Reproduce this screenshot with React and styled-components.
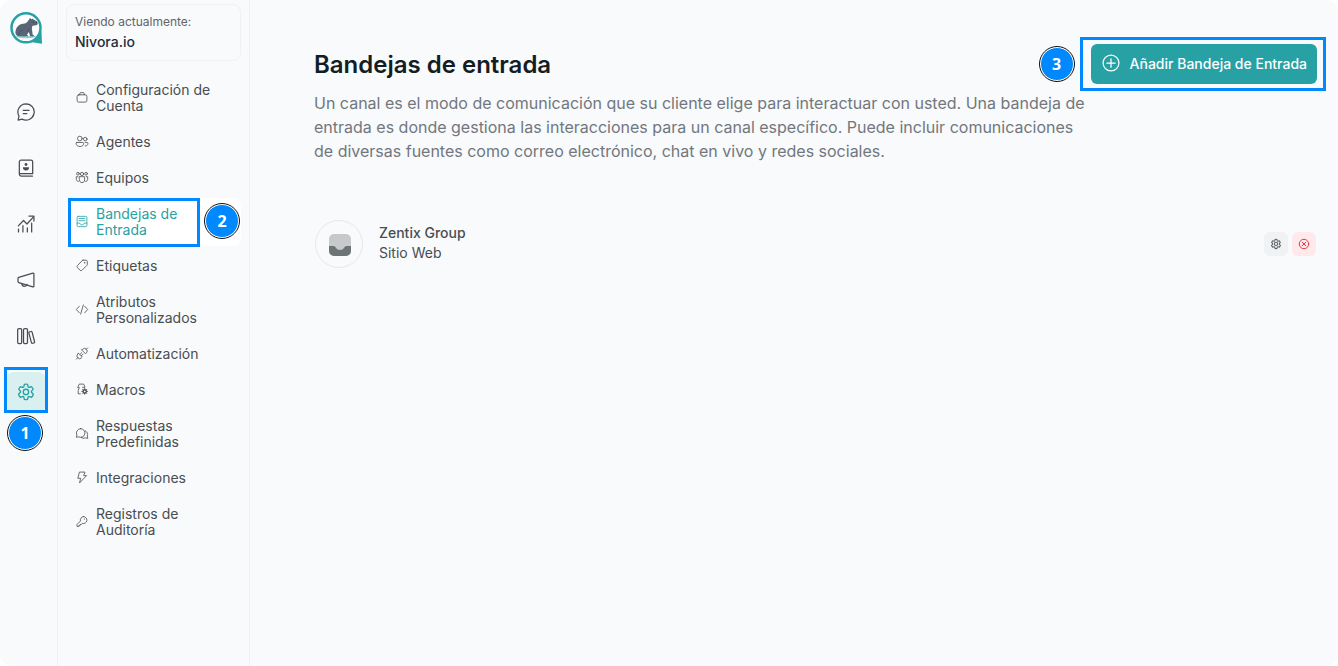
import React, { useState } from 'react';
import styled, { createGlobalStyle } from 'styled-components';

const TEAL = '#28a1a5';
const BLUE = '#0088ff';

const GlobalStyle = createGlobalStyle`
  * {
    box-sizing: border-box;
  }
  body {
    margin: 0;
    background: #ffffff;
    color: #494d52;
    font-family: Inter, 'Noto Sans', sans-serif;
    font-size: 14px;
  }
  button {
    font-family: inherit;
    cursor: pointer;
  }
`;

const Page = styled.div`
  display: flex;
  min-height: 100vh;
  background: #f8fafc;
  border-radius: 12px;
`;

const Rail = styled.nav`
  display: flex;
  flex-direction: column;
  align-items: flex-start;
  gap: 16px;
  flex: 0 0 58px;
  padding: 12px 6px;
  border-right: 1px solid #eff1f4;
`;

const LogoLink = styled.a`
  display: block;
  height: 32px;
  margin: 0 4px 32px;
`;

const RailItem = styled.div`
  position: relative;
`;

const RailButton = styled.button`
  display: flex;
  align-items: center;
  justify-content: center;
  width: 40px;
  height: 40px;
  padding: 0;
  border: 0;
  border-radius: 8px;
  background: ${({ $active }) => ($active ? '#daf0f0' : 'transparent')};
  color: ${({ $active }) => ($active ? TEAL : '#494d52')};
`;

const Sidebar = styled.aside`
  flex: 0 0 192px;
  padding: 4px 8px;
  border-right: 1px solid #eff1f4;
`;

const AccountCard = styled.div`
  height: 57px;
  padding: 7px 8px;
  margin-bottom: 13px;
  border: 1px solid #eff1f4;
  border-radius: 8px;
`;

const AccountLabel = styled.div`
  font-size: 12px;
  line-height: 20px;
  color: #5f656b;
`;

const AccountName = styled.div`
  font-size: 14px;
  font-weight: 500;
  line-height: 20px;
  color: #1f2d3d;
`;

const MenuList = styled.ul`
  display: flex;
  flex-direction: column;
  gap: 4px;
  margin: 0;
  padding: 0;
  list-style: none;
`;

const MenuItem = styled.li`
  position: relative;
`;

const MenuLink = styled.a`
  display: flex;
  align-items: center;
  gap: 6px;
  padding: 8px 16px 8px 8px;
  border-radius: 8px;
  background: ${({ $active }) => ($active ? '#ffffff' : 'transparent')};
  color: ${({ $active }) => ($active ? TEAL : '#494d52')};
  font-size: 14px;
  line-height: 16px;
  text-decoration: none;

  svg {
    flex: 0 0 16px;
    margin-bottom: 2px;
  }
`;

const Main = styled.main`
  flex: 1;
  min-width: 0;
  padding: 44px 21px 44px 64px;
`;

const Header = styled.header`
  display: flex;
  align-items: flex-start;
  gap: 2px;
  margin-bottom: 57px;
`;

const Intro = styled.div`
  flex: 1;
`;

const Title = styled.h1`
  margin: 0 0 5px;
  font-size: 24px;
  font-weight: 600;
  line-height: 42px;
  color: #151d24;
`;

const Description = styled.p`
  margin: 0;
  font-size: 16px;
  line-height: 24px;
  color: #72777d;
`;

const ActionWrap = styled.div`
  position: relative;
`;

const AddButton = styled.button`
  display: flex;
  align-items: center;
  gap: 9px;
  height: 40px;
  padding: 0 10px 2px;
  border: 0;
  border-radius: 6px;
  background: ${TEAL};
  color: #ffffff;
  font-size: 14px;
  font-weight: 500;
  white-space: nowrap;
`;

const InboxRow = styled.section`
  display: flex;
  align-items: center;
  gap: 16px;
  padding: 0 1px;
`;

const Avatar = styled.div`
  display: flex;
  align-items: center;
  justify-content: center;
  width: 48px;
  height: 48px;
  padding: 2px 0 0 2px;
  border: 1px solid #e6e8eb;
  border-radius: 50%;
`;

const InboxInfo = styled.div`
  flex: 1;
  padding-bottom: 2px;
  line-height: 20px;
`;

const InboxName = styled.div`
  font-weight: 500;
`;

const RowActions = styled.div`
  display: flex;
  gap: 4px;
`;

const IconButton = styled.button`
  display: flex;
  align-items: center;
  justify-content: center;
  width: 24px;
  height: 24px;
  padding: 0;
  border: 0;
  border-radius: 6px;
  background: ${({ $danger }) => ($danger ? '#ffe9eb' : '#f1f2f4')};
  color: ${({ $danger }) => ($danger ? '#d93d4a' : '#5a6066')};
`;

// tutorial marks that lie over the controls
const Outline = styled.span`
  position: absolute;
  inset: ${({ $inset }) => $inset};
  border: 3px solid ${BLUE};
  pointer-events: none;
`;

const Step = styled.span`
  position: absolute;
  left: ${({ $left }) => $left};
  top: ${({ $top }) => $top};
  display: flex;
  align-items: center;
  justify-content: center;
  width: 34px;
  height: 34px;
  border: 1px solid #ffffff;
  border-radius: 50%;
  outline: 1px solid #111111;
  background: ${BLUE};
  color: #ffffff;
  font-family: 'Open Sans', sans-serif;
  font-size: 16px;
  font-weight: 700;
  pointer-events: none;
`;

const GEAR =
  'M10.2 2.6 C11.4 2.3 12.6 2.3 13.8 2.6 L14.3 4.9 C14.5 5.6 15.2 6 15.9 5.8 L18.2 5.1 C19 6 19.7 7 20.1 8.2 L18.4 9.9 C17.9 10.4 17.9 11.2 18.4 11.7 L20.3 13.6 C19.9 14.9 19.2 16 18.3 17 L15.9 16.3 C15.2 16.1 14.5 16.5 14.3 17.2 L13.8 19.5 C12.6 19.8 11.4 19.8 10.2 19.5 L9.7 17.2 C9.5 16.5 8.8 16.1 8.1 16.3 L5.7 17 C4.8 16 4.1 14.9 3.7 13.6 L5.6 11.7 C6.1 11.2 6.1 10.4 5.6 9.9 L3.9 8.2 C4.3 7 5 6 5.8 5.1 L8.1 5.8 C8.8 6 9.5 5.6 9.7 4.9 Z';

const icons = {
  chat: (
    <>
      <path d="M12 2.200a9.800 9.800 0 1 1-4.700 18.400L2.500 21.800l1.100-4.900A9.800 9.800 0 0 1 12 2.200z" />
      <path d="M8.700 10h7M8.700 14h4.200" />
    </>
  ),
  contacts: (
    <>
      <path d="M4 19.500v-15a2 2 0 0 1 2-2h12a2 2 0 0 1 2 2v14.300H4M4 19a2.400 2.400 0 0 0 2.400 2.700h13.400" />
      <circle cx="12" cy="7.800" r="1.700" fill="currentColor" stroke="none" />
      <path d="M8.300 11.200h7.400c.3 2.500-1.300 3.800-3.700 3.800s-4-1.300-3.700-3.800z" fill="currentColor" stroke="none" />
    </>
  ),
  reports: (
    <>
      <path d="M2.800 14.200 9 7.800l4.200 4.200L21 3.500" />
      <path d="M15.500 2.500h6v6M3 18v3.500M8.300 14v7.500M13.600 16.500v5M18.800 11v10.500" />
    </>
  ),
  megaphone: (
    <>
      <path d="M20.200 3.800 3.300 8.900a1.300 1.300 0 0 0-.9 1.200v3.800c0 .6.400 1.100.9 1.200l16.900 5.100c.7.200 1.300-.3 1.300-1V4.800c0-.7-.6-1.200-1.300-1z" />
      <path d="M7 16.200c0 2 1.400 3.300 3.200 3.300 1.500 0 2.700-.9 3.100-2.300" />
    </>
  ),
  library: (
    <>
      <rect x="2" y="3" width="4.800" height="18" rx="1.500" />
      <rect x="9" y="3" width="4.800" height="18" rx="1.500" />
      <path d="m16 7.100 1.900-.5c.6-.2 1.200.2 1.400.8l3 11.500c.2.600-.2 1.200-.8 1.400l-1.600.4c-.6.200-1.200-.2-1.400-.8L15.500 8.500c-.2-.6 0-1.200.5-1.400z" />
    </>
  ),
  gear: (
    <g transform="translate(-.9 .1) scale(1.07)">
      <path d={GEAR} />
      <circle cx="12" cy="11" r="3" />
    </g>
  ),
  briefcase: (
    <>
      <rect x="3" y="7" width="18" height="13.500" rx="3" />
      <path d="M8 7V4.500C8 3.700 8.700 3 9.500 3h5c.8 0 1.500.7 1.500 1.500V7" />
    </>
  ),
  people: (
    <>
      <circle cx="8" cy="6.500" r="4.300" />
      <circle cx="18" cy="7.500" r="3.300" />
      <path d="M2.500 13.800h11c.9 0 1.500.7 1.500 1.500 0 3.900-2.500 6-6.500 6s-7.500-2.100-7.500-6c0-.8.600-1.500 1.500-1.500z" />
      <path d="M18 13.800h3.500c.9 0 1.500.6 1.500 1.500 0 3.300-2.100 5-5 5" />
    </>
  ),
  team: (
    <>
      <circle cx="12" cy="5.500" r="3" />
      <circle cx="4.500" cy="5" r="2.500" />
      <circle cx="19.500" cy="5" r="2.500" />
      <path d="M7.200 10.500h9.600v6c0 3-2.100 5-4.800 5s-4.800-2-4.800-5z" />
      <path d="M4 10.500H1.500v4.800c0 2.200 1.500 3.900 3.800 3.900M20 10.500h2.500v4.800c0 2.200-1.500 3.900-3.800 3.900" />
    </>
  ),
  inbox: (
    <>
      <rect x="3" y="2.500" width="18" height="19" rx="2" />
      <path d="M3 15h5c.5 2.200 1.800 3.200 4 3.200s3.500-1 4-3.200h5" />
      <path d="M6.500 6.500h11M6.500 10.500h11" />
    </>
  ),
  tag: (
    <>
      <path d="M13.800 2.300h6c1.100 0 2 .9 2 2v5.800c0 .6-.2 1.100-.6 1.500l-9.300 9.300c-.9.900-2.400.9-3.300 0l-5.200-5.200c-.9-.9-.9-2.400 0-3.300l9-9.500c.4-.4.900-.6 1.400-.6z" />
      <circle cx="17" cy="7" r="1.300" fill="currentColor" stroke="none" />
    </>
  ),
  code: <path d="M7 6 1.500 12 7 18M17 6l5.500 6-5.500 6M14.500 3.500l-5 17" />,
  plug: (
    <>
      <path d="m5.500 11.500 7 7-1.600 1.600a4.500 4.500 0 0 1-6.700 0 4.700 4.700 0 0 1-.3-7zM11.500 5.500l7 7 1.700-1.700a4.700 4.700 0 0 0 0-6.600 4.700 4.700 0 0 0-7-.3z" />
      <path d="m1.500 22.500 2.700-2.700M22.500 1.500l-2.700 2.700M8.500 13.500l3-3M11 16l3-3" />
    </>
  ),
  macros: (
    <>
      <path d="M17 7.500V6l-2-4H7L4 8.500h3L5 14v6h4M13 8h4" />
      <circle cx="17" cy="15.500" r="3" strokeWidth="2.500" />
      <path d="M17 10v2M17 19v2M11.500 15.500h2M20.500 15.500h2M13 11.500l1.500 1.500M19.500 18l1.500 1.500M13 19.500l1.500-1.500M19.500 13l1.500-1.500" />
    </>
  ),
  replies: (
    <>
      <path d="M9.500 3a8 8 0 1 1-3.500 15.200L1.500 19l1.100-4.200A8 8 0 0 1 9.500 3z" />
      <path d="M18 7a7.200 7.200 0 0 1 3.800 9.500l.9 4.500-4.500-.9a7.800 7.800 0 0 1-7.700-.6" />
    </>
  ),
  flash: <path d="M8 2h9.500l-2.500 6.500h5.500L7.500 22l2-8.500H5z" />,
  key: (
    <>
      <path d="M14.500 2.800a6.500 6.500 0 1 1-1.900 12.700L10.500 17.500H8.300v2.200H6v1.500H2.800v-3.800l6.400-6.400a6.500 6.500 0 0 1 5.300-8.200z" />
      <circle cx="16.500" cy="7.500" r="1" fill="currentColor" stroke="none" />
    </>
  ),
  add: (
    <>
      <circle cx="12" cy="12" r="9.500" />
      <path d="M12 7v10M7 12h10" />
    </>
  ),
  dismiss: (
    <>
      <circle cx="12" cy="12" r="9.500" />
      <path d="m8.500 8.500 7 7M15.500 8.500l-7 7" />
    </>
  ),
};

const Icon = ({ name, size, weight = 1.5 }) => (
  <svg
    width={size}
    height={size}
    viewBox="0 0 24 24"
    fill="none"
    stroke="currentColor"
    strokeWidth={weight}
    strokeLinecap="round"
    strokeLinejoin="round"
    aria-hidden="true"
  >
    {icons[name]}
  </svg>
);

// capybara in a speech bubble
const Logo = () => (
  <svg width="32" height="32" viewBox="0 0 32 32" aria-hidden="true">
    <path d="M20 29.500c3.500 1 7 1.600 12 2.200L31.500 19z" fill={TEAL} />
    <circle cx="16" cy="15.800" r="14.500" fill="#ffffff" stroke={TEAL} strokeWidth="2.500" />
    <path d="M5.500 24h21c-2 1.600-5 2.200-10.500 2.200S7 25.500 5.500 24z" fill="#8fd0d2" />
    <path
      d="M5.400 20.500c.2-5 3.600-8.300 7.600-8.700 2.500-.2 4-1.100 5-2.700l1.200-1.800c.1-1 1.200-1.300 1.700-.5l.6.500.9-.5c.5-.4 1.100 0 1.100.6l2.800 1.600c1 .7 1.600 1.700 1.400 2.700-.2 1.100-1.200 1.600-2.800 1.700l-2.400.4c-.6 1.500-.8 3-.4 4.600l.5 4.100 1.300.9c.3.500 0 .9-.6.900h-3.200l-1.200-4.300-2 2.800 1 .7c.3.500 0 .8-.6.800H9c-2.400-.3-3.500-1.600-3.600-3.800z"
      fill="#5a6577"
    />
    <path d="M8.800 22.300c.3-2.700 2-4 4.500-4M18.500 16.500c0 1.500-.4 2.600-1.200 3.400" fill="none" stroke="#434d5d" strokeWidth=".7" />
    <circle cx="23.300" cy="9.900" r=".5" fill="#262e3a" />
    <path d="M26.200 10.300l1 .6" stroke="#262e3a" strokeWidth=".8" />
  </svg>
);

const InboxGlyph = () => (
  <svg width="22" height="22" viewBox="0 0 22 22" aria-hidden="true">
    <rect width="22" height="22" rx="5" fill="#c7c9cb" />
    <path
      d="M0 12h4.500c1.200 0 1.700.8 2.400 1.800C8 15.300 9 16 11 16s3-.7 4.100-2.200c.7-1 1.200-1.800 2.400-1.800H22v5a5 5 0 0 1-5 5H5a5 5 0 0 1-5-5z"
      fill="#6c7476"
    />
  </svg>
);

const railItems = [
  { id: 'chat', label: 'Conversaciones' },
  { id: 'contacts', label: 'Contactos' },
  { id: 'reports', label: 'Informes' },
  { id: 'megaphone', label: 'Campañas' },
  { id: 'library', label: 'Centro de ayuda' },
  { id: 'gear', label: 'Ajustes' },
];

const menuItems = [
  { icon: 'briefcase', label: 'Configuración de Cuenta' },
  { icon: 'people', label: 'Agentes' },
  { icon: 'team', label: 'Equipos' },
  { icon: 'inbox', label: 'Bandejas de Entrada' },
  { icon: 'tag', label: 'Etiquetas' },
  { icon: 'code', label: 'Atributos Personalizados' },
  { icon: 'plug', label: 'Automatización' },
  { icon: 'macros', label: 'Macros' },
  { icon: 'replies', label: 'Respuestas Predefinidas' },
  { icon: 'flash', label: 'Integraciones' },
  { icon: 'key', label: 'Registros de Auditoría' },
];

export default function App() {
  const [section, setSection] = useState('gear');
  const [page, setPage] = useState('inbox');

  return (
    <>
      <GlobalStyle />
      <Page>
        <Rail>
          <LogoLink href="#" aria-label="Inicio">
            <Logo />
          </LogoLink>
          {railItems.map(({ id, label }) => (
            <RailItem key={id}>
              <RailButton $active={id === section} aria-label={label} onClick={() => setSection(id)}>
                <Icon name={id} size={20} />
              </RailButton>
              {id === 'gear' && (
                <>
                  <Outline $inset="-5px -2px -1px" />
                  <Step $left="2px" $top="44px">1</Step>
                </>
              )}
            </RailItem>
          ))}
        </Rail>

        <Sidebar>
          <AccountCard>
            <AccountLabel>Viendo actualmente:</AccountLabel>
            <AccountName>Nivora.io</AccountName>
          </AccountCard>
          <MenuList>
            {menuItems.map(({ icon, label }) => (
              <MenuItem key={icon}>
                <MenuLink href="#" $active={icon === page} onClick={() => setPage(icon)}>
                  <Icon name={icon} size={13} />
                  <span>{label}</span>
                </MenuLink>
                {icon === 'inbox' && (
                  <>
                    <Outline $inset="0 41px -1px 2px" />
                    <Step $left="139px" $top="6px">2</Step>
                  </>
                )}
              </MenuItem>
            ))}
          </MenuList>
        </Sidebar>

        <Main>
          <Header>
            <Intro>
              <Title>Bandejas de entrada</Title>
              <Description>
                Un canal es el modo de comunicación que su cliente elige para interactuar con usted. Una
                bandeja de entrada es donde gestiona las interacciones para un canal específico. Puede
                incluir comunicaciones de diversas fuentes como correo electrónico, chat en vivo y redes
                sociales.
              </Description>
            </Intro>
            <ActionWrap>
              <AddButton>
                <Icon name="add" size={20} />
                Añadir Bandeja de Entrada
              </AddButton>
              <Outline $inset="-7px -9px -7px -11px" />
              <Step $left="-51px" $top="3px">3</Step>
            </ActionWrap>
          </Header>

          <InboxRow>
            <Avatar>
              <InboxGlyph />
            </Avatar>
            <InboxInfo>
              <InboxName>Zentix Group</InboxName>
              <div>Sitio Web</div>
            </InboxInfo>
            <RowActions>
              <IconButton aria-label="Ajustes">
                <Icon name="gear" size={12} weight={2} />
              </IconButton>
              <IconButton $danger aria-label="Eliminar">
                <Icon name="dismiss" size={12} weight={2} />
              </IconButton>
            </RowActions>
          </InboxRow>
        </Main>
      </Page>
    </>
  );
}
